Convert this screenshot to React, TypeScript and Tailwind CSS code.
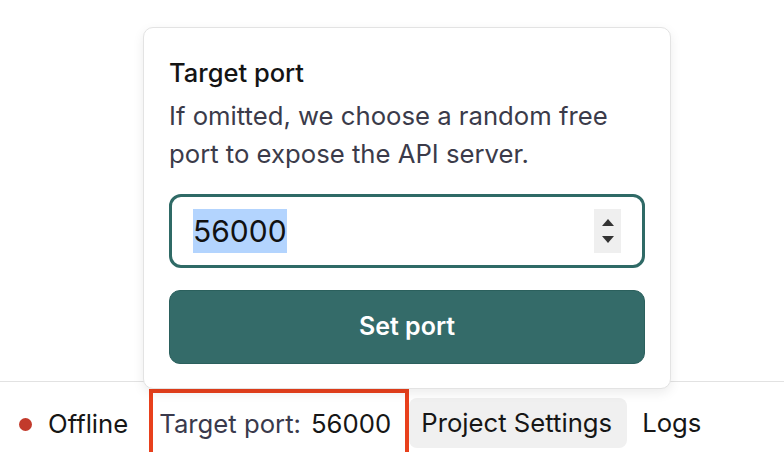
import React from "react";

function Spinner() {
  return (
    <div className="flex h-[44px] w-[27px] flex-col items-center justify-center gap-[10px] bg-[#efefef]">
      <svg width="12" height="7" viewBox="0 0 12 7">
        <path d="M6 0 L12 7 L0 7 Z" fill="#333" />
      </svg>
      <svg width="12" height="7" viewBox="0 0 12 7">
        <path d="M0 0 L12 0 L6 7 Z" fill="#333" />
      </svg>
    </div>
  );
}

function PortPopover() {
  return (
    <div className="absolute left-[143px] top-[27px] w-[528px] rounded-[10px] border border-[#e3e3e3] bg-white px-[25px] pb-[24px] pt-[28px] shadow-[0_4px_12px_rgba(0,0,0,0.08)]">
      <div className="text-[25.5px] font-medium leading-[34px] text-[#141414]">Target port</div>
      <p className="mt-[7px] text-[25.7px] leading-[38px] text-[#3b3b4a]">
        If omitted, we choose a random free port to expose the API server.
      </p>
      <div className="mt-[21px] flex h-[74px] items-center justify-between rounded-[12px] border-[3px] border-[#2f6a66] pl-[21px] pr-[21px]">
        <span className="bg-[#b3d4fe] text-[30px] leading-[44px] text-[#111]">56000</span>
        <Spinner />
      </div>
      <button className="mt-[22px] flex h-[74px] w-full items-center justify-center rounded-[11px] border border-[#2b605d] bg-[#346b69] text-[25px] font-semibold text-white">
        Set port
      </button>
    </div>
  );
}

export default function App() {
  return (
    <div className="relative h-[452px] w-[784px] overflow-hidden bg-white font-['Inter',sans-serif]">
      <div className="absolute inset-x-0 top-[381px] flex h-[80px] items-start border-t border-[#e2e2e2] pl-[19px] pt-[7px] text-[25.7px] text-[#161616]">
        <div className="flex h-[70px] items-center">
          <span className="h-[13px] w-[13px] rounded-full bg-[#c23a2b]" />
          <span className="ml-[16px]">Offline</span>
        </div>
        <div className="ml-[21px] flex h-[74px] w-[260px] items-start border-[4px] border-[#e8401c] pl-[6px] pt-[5px]">
          <div className="flex h-[52px] items-center">
            <span className="text-[#3a3a4c]">Target port:</span>
            <span className="ml-[10px]">56000</span>
          </div>
        </div>
        <div className="mt-[9px] flex h-[50px] items-center rounded-[8px] bg-[#f0f0f0] pl-[12px] pr-[15px]">
          Project Settings
        </div>
        <div className="mt-[9px] flex h-[50px] items-center px-[15px]">Logs</div>
      </div>
      <PortPopover />
    </div>
  );
}
